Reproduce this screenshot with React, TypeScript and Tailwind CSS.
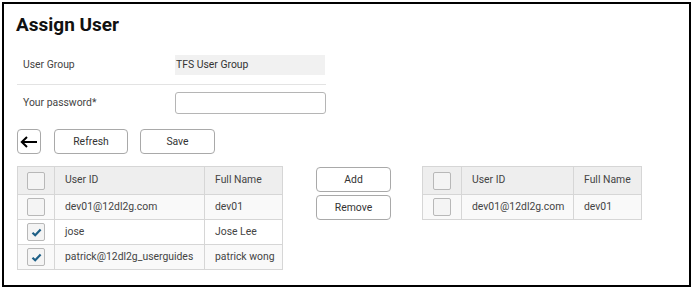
import React from 'react'

type Row = { id: string; name: string; checked?: boolean }

const leftRows: Row[] = [
  { id: 'dev01@12dl2g.com', name: 'dev01' },
  { id: 'jose', name: 'Jose Lee', checked: true },
  { id: 'patrick@12dl2g_userguides', name: 'patrick wong', checked: true },
]

const rightRows: Row[] = [{ id: 'dev01@12dl2g.com', name: 'dev01' }]

function Check({ checked }: { checked?: boolean }) {
  return (
    <span className="flex h-[18px] w-[18px] items-center justify-center rounded-[2px] border border-[#b8b8b8] bg-[#f4f4f4]">
      {checked && (
        <svg width="11" height="9" viewBox="0 0 11 9">
          <path d="M1.5 4.8 L4.2 7.3 L9.6 1.6" fill="none" stroke="#1d5f86" strokeWidth="2.2" />
        </svg>
      )}
    </span>
  )
}

function Btn({ children, className }: { children: React.ReactNode; className?: string }) {
  return (
    <button
      type="button"
      className={
        'flex h-[25px] items-center justify-center rounded-[4px] border border-[#a9a9a9] bg-white text-[10.4px] text-[#333] ' +
        (className ?? '')
      }
    >
      {children}
    </button>
  )
}

// tabel user (kiri & kanan pakai komponen sama)
function UserTable({ rows, cols, className }: { rows: Row[]; cols: [string, string, string]; className?: string }) {
  return (
    <div className={'border border-[#d6d6d6] text-[10.4px] text-[#444] ' + (className ?? '')}>
      <div className="flex h-[27px] bg-[#eeeeee]">
        <div className={'flex items-center justify-center border-r border-[#d6d6d6] ' + cols[0]}>
          <Check />
        </div>
        <div className={'flex items-center border-r border-[#d6d6d6] pb-[2px] pl-[10px] ' + cols[1]}>User ID</div>
        <div className={'flex items-center pb-[2px] pl-[10px] ' + cols[2]}>Full Name</div>
      </div>
      {rows.map((r, i) => (
        <div key={r.id} className={'flex h-[25px] border-t border-[#d6d6d6] ' + (i === 1 ? 'bg-white' : 'bg-[#f9f9f9]')}>
          <div className={'flex items-center justify-center border-r border-[#d6d6d6] ' + cols[0]}>
            <Check checked={r.checked} />
          </div>
          <div className={'flex items-center border-r border-[#d6d6d6] pl-[10px] ' + cols[1]}>{r.id}</div>
          <div className={'flex items-center pl-[10px] ' + cols[2]}>{r.name}</div>
        </div>
      ))}
    </div>
  )
}

export default function App() {
  return (
    <div className="h-[292px] w-[695px] bg-white p-[2px] font-['Roboto',sans-serif]">
      <div className="h-[285px] w-[689px] border-2 border-black pl-[12px] pt-[9px]">
        <h1 className="text-[19px] font-bold leading-[23px] text-[#111]">Assign User</h1>

        {/* form */}
        <div className="mt-[10px] ml-[1px] w-[309px] text-[10.4px] text-[#444]">
          <div className="flex h-[39px] items-center border-b border-[#e3e3e3]">
            <div className="w-[158px] pl-[6px]">User Group</div>
            <div className="flex h-[20px] w-[150px] items-center bg-[#f1f1f1] pl-[1px] text-[#333]">TFS User Group</div>
          </div>
          <div className="flex items-center pt-[7px]">
            <div className="w-[158px] pl-[6px]">Your password*</div>
            <input className="h-[22px] w-[151px] rounded-[3px] border border-[#b5b5b5] bg-white outline-none" />
          </div>
        </div>

        {/* buttons */}
        <div className="mt-[15px] ml-[1px] flex items-center">
          <Btn className="w-[24px]">
            <svg width="18" height="12" viewBox="0 0 18 12">
              <path d="M17 6 H2 M7 1 L1.8 6 L7 11" fill="none" stroke="#000" strokeWidth="2" />
            </svg>
          </Btn>
          <Btn className="ml-[13px] w-[74px]">Refresh</Btn>
          <Btn className="ml-[12px] w-[75px]">Save</Btn>
        </div>

        {/* tables */}
        <div className="mt-[12px] ml-[1px] flex items-start">
          <UserTable rows={leftRows} cols={['w-[37px]', 'w-[150px]', 'w-[77px]']} />
          <div className="ml-[33px] flex flex-col gap-[3px] pt-[1px]">
            <Btn className="w-[75px]">Add</Btn>
            <Btn className="w-[75px]">Remove</Btn>
          </div>
          <UserTable className="ml-[31px]" rows={rightRows} cols={['w-[39px]', 'w-[112px]', 'w-[67px]']} />
        </div>
      </div>
    </div>
  )
}
